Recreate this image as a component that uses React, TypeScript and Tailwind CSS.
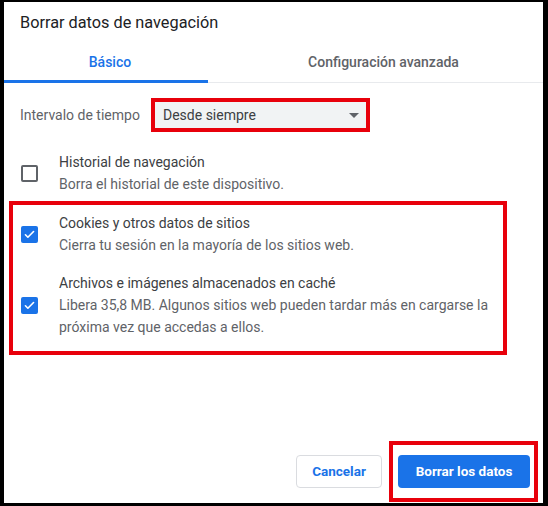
import React, { useState } from 'react';

const font = { fontFamily: 'Roboto, "Noto Sans", Arial, sans-serif' };

function Checkbox({ checked }: { checked: boolean }) {
  if (checked) {
    return (
      <div className="w-[17px] h-[17px] rounded-[2px] bg-[#1a73e8] flex items-center justify-center shrink-0">
        <svg width="13" height="13" viewBox="0 0 24 24" fill="none">
          <path d="M4.5 12.5l4.5 4.5L19.5 6.5" stroke="white" strokeWidth="3" strokeLinecap="round" strokeLinejoin="round" />
        </svg>
      </div>
    );
  }
  return <div className="w-[17px] h-[17px] rounded-[2px] border-2 border-[#5f6368] shrink-0" />;
}

function Option({ checked, title, desc }: { checked: boolean; title: string; desc: React.ReactNode }) {
  return (
    <div className="flex items-center">
      <div className="w-[38px] flex shrink-0">
        <Checkbox checked={checked} />
      </div>
      <div className="flex flex-col text-[14px] leading-[22px]">
        <span className="text-[#3c4043]">{title}</span>
        <span className="text-[#5f6368]">{desc}</span>
      </div>
    </div>
  );
}

export default function App() {
  const [tab, setTab] = useState(0);

  return (
    <div
      style={font}
      className="w-[548px] h-[506px] bg-white border-l-4 border-t-2 border-r-[5px] border-b-[3px] border-black flex flex-col overflow-hidden"
    >
      {/* Title */}
      <div className="pl-4 pt-[9px] h-[34px] text-[16.3px] leading-[24px] text-[#202124]">
        Borrar datos de navegación
      </div>

      {/* Tabs */}
      <div className="flex items-end mt-[8px]">
        <button
          type="button"
          onClick={() => setTab(0)}
          className={`w-[204px] h-[39px] pl-2 text-[14px] font-medium border-b-[3px] ${tab === 0 ? 'text-[#1a73e8] border-[#1a73e8]' : 'text-[#5f6368] border-[#e8eaed]'}`}
        >
          Básico
        </button>
        <button
          type="button"
          onClick={() => setTab(1)}
          className={`flex-1 h-[39px] pl-4 text-[14px] font-medium ${tab === 1 ? 'text-[#1a73e8] border-b-[3px] border-[#1a73e8]' : 'text-[#5f6368] border-b border-[#e8eaed] pb-[2px]'}`}
        >
          Configuración avanzada
        </button>
      </div>

      {/* Time range */}
      <div className="flex items-center pl-4 mt-[15px]">
        <span className="text-[14px] text-[#5f6368] w-[131px]">Intervalo de tiempo</span>
        <div className="border-4 border-[#e8000b] w-[219px] h-[34px]">
          <div className="h-full bg-[#f1f3f4] flex items-center justify-between pl-2 pr-[7px]">
            <span className="text-[14px] text-[#3c4043]">Desde siempre</span>
            <svg width="10" height="5" viewBox="0 0 10 5">
              <path d="M0 0h10L5 5z" fill="#5f6368" />
            </svg>
          </div>
        </div>
      </div>

      {/* Options */}
      <div className="pl-[17px] mt-[19px]">
        <Option checked={false} title="Historial de navegación" desc="Borra el historial de este dispositivo." />
      </div>

      <div className="ml-[5px] mt-[6px] w-[498px] border-4 border-[#e8000b] pl-[8px] pt-[7px] pb-[13px] flex flex-col gap-[16px]">
        <Option checked title="Cookies y otros datos de sitios" desc="Cierra tu sesión en la mayoría de los sitios web." />
        <Option
          checked
          title="Archivos e imágenes almacenados en caché"
          desc={
            <>
              Libera 35,8 MB. Algunos sitios web pueden tardar más en cargarse la
              <br />
              próxima vez que accedas a ellos.
            </>
          }
        />
      </div>

      {/* Actions */}
      <div className="mt-auto flex items-center justify-end pr-[5px] pb-[1px] gap-[7px]">
        <button
          type="button"
          className="w-[86px] h-[33px] rounded-[4px] border border-[#dadce0] bg-white text-[13.5px] font-bold text-[#1a73e8]"
        >
          Cancelar
        </button>
        <div className="border-4 border-[#e8000b] pl-[5px] pr-[4px] py-[10px]">
          <button
            type="button"
            className="w-[132px] h-[33px] rounded-[4px] bg-[#1a73e8] text-[13.5px] font-bold text-white"
          >
            Borrar los datos
          </button>
        </div>
      </div>
    </div>
  );
}
